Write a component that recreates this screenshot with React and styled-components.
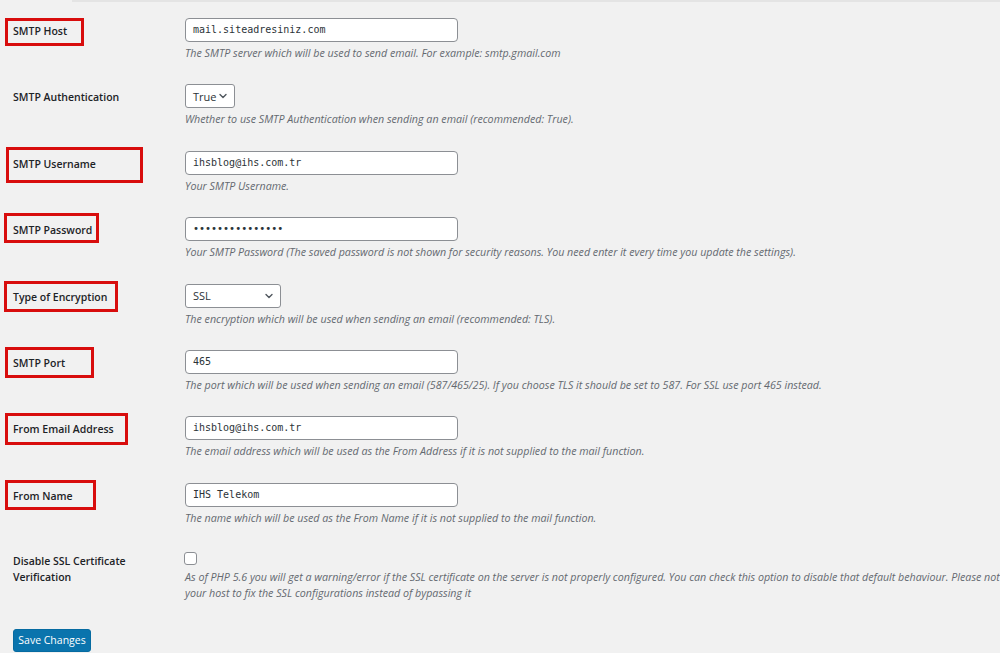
import React from "react";
import styled, { createGlobalStyle } from "styled-components";

const Global = createGlobalStyle`
  html, body { margin: 0; padding: 0; background: #f1f1f1; overflow: hidden; }
  body { font-family: "Open Sans", "Noto Sans", sans-serif; color: #1d2327; }
  * { box-sizing: border-box; }
`;

const Page = styled.div`
  width: 1000px;
  height: 653px;
  overflow: hidden;
  position: relative;
`;

const TopEdge = styled.div`
  height: 2px;
  margin-left: 72px;
  background: #e4e4e4;
`;

const Form = styled.div`
  padding-top: 16px;
  display: flex;
  flex-direction: column;
`;

const Row = styled.div`
  display: grid;
  grid-template-columns: 185px 1fr;
  height: ${(p) => p.$h || 66.4}px;
`;

const LabelCell = styled.div`
  position: relative;
  padding-left: 13px;
  padding-top: ${(p) => p.$pt || 1}px;
  font-size: 10.5px;
  font-weight: 600;
  line-height: ${(p) => p.$lh || 24}px;
  color: #1d2327;
`;

const Highlight = styled.div`
  position: absolute;
  border: 3px solid #d80d0d;
  pointer-events: none;
`;

const FieldCell = styled.div`
  display: flex;
  flex-direction: column;
  align-items: flex-start;
  padding-top: ${(p) => p.$pt || 0}px;
`;

const TextInput = styled.div`
  width: 273px;
  height: 24px;
  background: #fff;
  border: 1px solid #8c8f94;
  border-radius: 4px;
  padding: 0 7px;
  font-family: "DejaVu Sans Mono", "Liberation Mono", monospace;
  font-size: 10px;
  line-height: 22px;
  color: #2c3338;
  white-space: nowrap;
`;

const SelectBox = styled.div`
  width: ${(p) => p.$w}px;
  height: 24px;
  background: #fff;
  border: 1px solid #8c8f94;
  border-radius: 3px;
  padding: 0 6px 0 7px;
  display: flex;
  align-items: center;
  justify-content: space-between;
  font-size: 11px;
  color: #2c3338;
`;

const Desc = styled.p`
  margin: 4px 0 0;
  font-size: 10.7px;
  line-height: ${(p) => p.$lh || 14}px;
  font-style: italic;
  color: #646970;
  white-space: nowrap;
`;

const Checkbox = styled.div`
  width: 13px;
  height: 13px;
  background: #fff;
  border: 1px solid #8c8f94;
  border-radius: 3px;
  margin-left: -1px;
`;

const ButtonRow = styled.div`
  padding: 6px 0 0 13px;
`;

const Button = styled.button`
  width: 78px;
  height: 23px;
  padding: 0;
  background: #0a74ad;
  border: 1px solid #066ba1;
  border-radius: 3px;
  color: #fff;
  font-family: "Open Sans", "Noto Sans", sans-serif;
  font-size: 10.5px;
  line-height: 21px;
  cursor: pointer;
`;

const Chevron = () => (
  <svg width="10" height="10" viewBox="0 0 10 10" fill="none">
    <path d="M2 3.5 L5 6.5 L8 3.5" stroke="#50575e" strokeWidth="1.4" strokeLinecap="round" strokeLinejoin="round" />
  </svg>
);

const rows = [
  {
    label: "SMTP Host",
    box: { left: 5, top: 0, width: 79, height: 28 },
    input: "mail.siteadresiniz.com",
    desc: "The SMTP server which will be used to send email. For example: smtp.gmail.com",
  },
  {
    label: "SMTP Authentication",
    select: { value: "True", w: 50 },
    desc: "Whether to use SMTP Authentication when sending an email (recommended: True).",
  },
  {
    label: "SMTP Username",
    box: { left: 6, top: -4, width: 137, height: 36 },
    input: "ihsblog@ihs.com.tr",
    desc: "Your SMTP Username.",
  },
  {
    label: "SMTP Password",
    box: { left: 4, top: -4, width: 95, height: 30 },
    input: "•••••••••••••••",
    desc: "Your SMTP Password (The saved password is not shown for security reasons. You need enter it every time you update the settings).",
  },
  {
    label: "Type of Encryption",
    box: { left: 4, top: -3, width: 114, height: 31 },
    select: { value: "SSL", w: 96 },
    desc: "The encryption which will be used when sending an email (recommended: TLS).",
  },
  {
    label: "SMTP Port",
    box: { left: 5, top: -3, width: 89, height: 31 },
    input: "465",
    desc: "The port which will be used when sending an email (587/465/25). If you choose TLS it should be set to 587. For SSL use port 465 instead.",
  },
  {
    label: "From Email Address",
    box: { left: 5, top: -3, width: 123, height: 32 },
    input: "ihsblog@ihs.com.tr",
    desc: "The email address which will be used as the From Address if it is not supplied to the mail function.",
  },
  {
    label: "From Name",
    box: { left: 5, top: -3, width: 91, height: 30 },
    input: "IHS Telekom",
    desc: "The name which will be used as the From Name if it is not supplied to the mail function.",
  },
];

export default function App() {
  return (
    <Page>
      <Global />
      <TopEdge />
      <Form>
        {rows.map((r) => (
          <Row key={r.label}>
            <LabelCell>
              {r.box && (
                <Highlight
                  style={{ left: r.box.left, top: r.box.top, width: r.box.width, height: r.box.height }}
                />
              )}
              {r.label}
            </LabelCell>
            <FieldCell>
              {r.select ? (
                <SelectBox $w={r.select.w}>
                  <span>{r.select.value}</span>
                  <Chevron />
                </SelectBox>
              ) : (
                <TextInput>{r.input}</TextInput>
              )}
              <Desc>{r.desc}</Desc>
            </FieldCell>
          </Row>
        ))}
        <Row $h={72}>
          <LabelCell $lh={16} $pt={4}>
            Disable SSL Certificate
            <br />
            Verification
          </LabelCell>
          <FieldCell $pt={3}>
            <Checkbox />
            <Desc $lh={16}>
              As of PHP 5.6 you will get a warning/error if the SSL certificate on the server is not properly configured. You can check this option to disable that default behaviour. Please not
              <br />
              your host to fix the SSL configurations instead of bypassing it
            </Desc>
          </FieldCell>
        </Row>
        <ButtonRow>
          <Button>Save Changes</Button>
        </ButtonRow>
      </Form>
    </Page>
  );
}
